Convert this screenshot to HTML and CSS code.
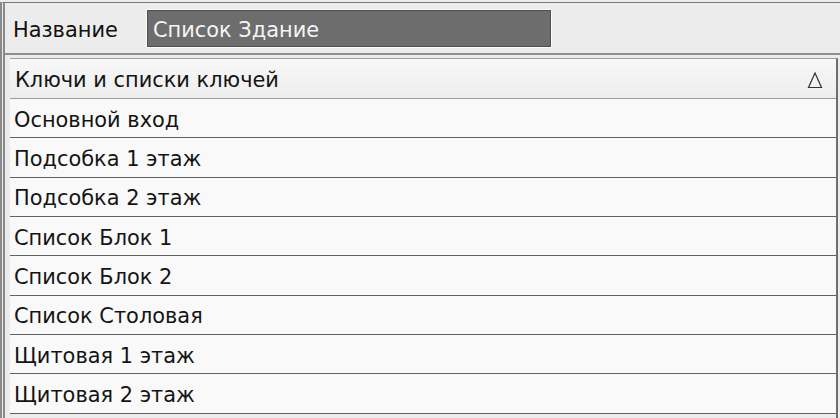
FILE: index.html
```html
<!DOCTYPE html>
<html lang="ru">
<head>
<meta charset="utf-8">
<title>Список</title>
<link rel="stylesheet" href="styles.css">
</head>
<body>
<div class="window">
  <div class="name-row">
    <span class="label">Название</span>
    <div class="input"><span class="input-text">Список Здание</span></div>
  </div>
  <div class="grid">
    <div class="head">
      <span class="cell">Ключи и списки ключей</span>
      <svg class="sort" width="16" height="17" viewBox="0 0 16 17"><path d="M8 1 L14.5 15.5 L1.5 15.5 Z" fill="none" stroke="#333" stroke-width="1.2" stroke-linejoin="miter"/></svg>
    </div>
    <div class="row"><span class="cell">Основной вход</span></div>
    <div class="row"><span class="cell">Подсобка 1 этаж</span></div>
    <div class="row"><span class="cell">Подсобка 2 этаж</span></div>
    <div class="row"><span class="cell">Список Блок 1</span></div>
    <div class="row"><span class="cell">Список Блок 2</span></div>
    <div class="row"><span class="cell">Список Столовая</span></div>
    <div class="row"><span class="cell">Щитовая 1 этаж</span></div>
    <div class="row"><span class="cell">Щитовая 2 этаж</span></div>
  </div>
</div>
</body>
</html>
```

FILE: styles.css
```css
html, body {
  margin: 0;
  padding: 0;
}
body {
  width: 840px;
  height: 418px;
  overflow: hidden;
  background: #ececec;
  font-family: "DejaVu Sans", "Noto Sans", sans-serif;
  font-size: 20.9px;
  color: #141414;
}
.window {
  margin-top: 2px;
  height: 416px;
  border-top: 1px solid #7c7c7c;
  border-left: 5px double #8a8a8a;
  box-sizing: border-box;
  display: flex;
  flex-direction: column;
}
.name-row {
  height: 52px;
  box-sizing: border-box;
  display: flex;
  align-items: center;
  padding-left: 8px;
  border-bottom: 2px solid #8e8e8e;
  margin-bottom: 3px;
}
.label {
  width: 134px;
  color: #111;
  padding-top: 3px;
}
.input {
  width: 404px;
  height: 37px;
  box-sizing: border-box;
  background: #6d6d6d;
  border: 1px solid #4e4e4e;
  outline: 1px solid #fbfbfb;
  display: flex;
  align-items: center;
  padding-left: 5px;
  padding-top: 3px;
  margin-top: 1px;
}
.input-text {
  color: #f4f4f4;
}
.grid {
  margin-left: 5px;
  margin-right: 2px;
  border-top: 1px solid #a0a0a0;
  border-right: 2px solid #6e6e6e;
  display: flex;
  flex-direction: column;
  flex: 1;
}
.head {
  height: 40px;
  box-sizing: border-box;
  display: flex;
  align-items: center;
  justify-content: space-between;
  background: linear-gradient(#f8f8f8, #ededed);
  border-bottom: 1px solid #9c9c9c;
  padding-left: 5px;
  padding-right: 13px;
  padding-top: 3px;
}
.sort {
  display: block;
  margin-top: 0;
}
.row {
  height: 39.33px;
  box-sizing: border-box;
  display: flex;
  align-items: center;
  background: #f9f9f9;
  border-bottom: 1px solid #626262;
  padding-left: 4px;
  padding-top: 3px;
}
.cell {
  white-space: nowrap;
}
```
